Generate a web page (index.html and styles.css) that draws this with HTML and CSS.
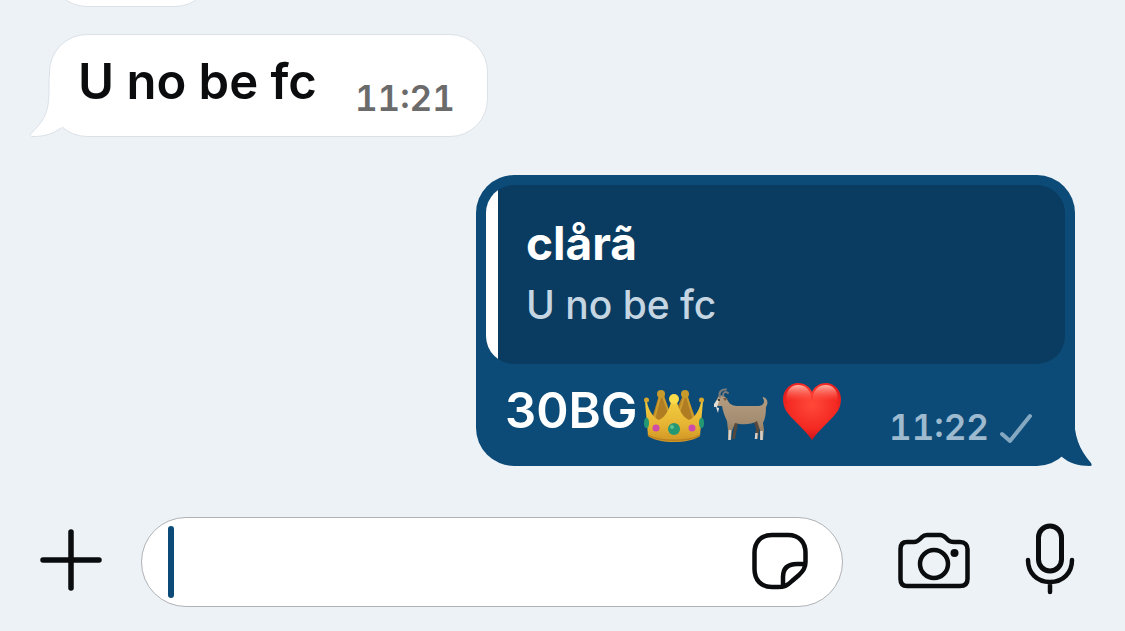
FILE: index.html
```html
<!DOCTYPE html>
<html lang="en">
<head>
<meta charset="utf-8">
<meta name="viewport" content="width=device-width, initial-scale=1">
<title>Chat</title>
<link rel="stylesheet" href="styles.css">
</head>
<body>
<main class="chat">
  <div class="bubble received earlier"></div>
  <article class="bubble received">
    <p class="message">U no be fc</p>
    <time class="time">11:21</time>
    <svg class="tail tail-left" viewBox="0 0 60 60" aria-hidden="true">
      <path d="M19 0V14C19 35 14 44 1.500 56C0 58 0 59.500 3 59.500C14 59.500 23 57 31 51L40 40V0Z" fill="#fff"/>
      <path d="M19 0V14C19 35 14 44 1.500 56C0 58 0 59.500 3 59.500C14 59.500 23 57 31 51" fill="none" stroke="#dbe1e7"/>
    </svg>
  </article>
  <article class="bubble sent">
    <blockquote class="quote">
      <cite class="author">clårã</cite>
      <p class="quoted">U no be fc</p>
    </blockquote>
    <div class="line">
      <p class="message">30BG</p>
      <svg class="emoji crown" viewBox="0 0 60 54" role="img" aria-label="Crown">
        <defs>
          <linearGradient id="gold" x1="0" y1="0" x2="0" y2="1"><stop offset="0" stop-color="#f5d13f"/><stop offset=".6" stop-color="#e6b434"/><stop offset="1" stop-color="#cf9524"/></linearGradient>
        </defs>
        <path d="M6 36L15 6H20L28 30L39 6H43L54 36Z" fill="#b07d22"/>
        <path d="M10 31L16 8M19 8L25 24M35 24L40 8M43 8L50 31" fill="none" stroke="#cb9c2e" stroke-width="2"/>
        <path d="M2 9C4 20 8 28 15 31C22 28 26 19 28 9H32C34 19 38 28 45 31C52 28 56 20 58 9L59 12L56 47C50 51 41 53 30 53C19 53 10 51 4 47L1 12Z" fill="url(#gold)"/>
        <path d="M4 46C14 53 46 53 56 46" fill="none" stroke="#b98020" stroke-width="1.500"/>
        <circle cx="17" cy="5" r="4" fill="#c79a2c"/><circle cx="41" cy="5" r="4" fill="#c79a2c"/>
        <circle cx="30" cy="10" r="5" fill="#fbdc4b"/><circle cx="2.500" cy="11" r="2.500" fill="#d9a62d"/><circle cx="57.500" cy="11" r="2.500" fill="#d9a62d"/>
        <circle cx="30" cy="40" r="6" fill="#239873"/><circle cx="28" cy="38" r="2" fill="#5fbf94"/>
        <circle cx="12" cy="39" r="3.500" fill="#cf4baa"/><circle cx="48" cy="39" r="3.500" fill="#cf4baa"/>
        <ellipse cx="2.500" cy="34" rx="2.500" ry="5" fill="#239873"/><ellipse cx="57.500" cy="34" rx="2.500" ry="5" fill="#239873"/>
      </svg>
      <svg class="emoji goat" viewBox="0 0 56 54" role="img" aria-label="Goat">
        <defs>
          <linearGradient id="coat" x1="0" y1="0" x2="0" y2="1"><stop offset="0" stop-color="#b49d80"/><stop offset=".6" stop-color="#a38c70"/><stop offset="1" stop-color="#8b765d"/></linearGradient>
        </defs>
        <path d="M19 33L21 40L19 51H22L25 35M40 33L43 40L42 51H45L48 32" fill="#55493d"/>
        <path d="M5 9C8 6 13 8 15 13C18 18 22 18 29 18H44C49 18 51 16 51 13C51 11 49 10 50 9C54 10 56 14 53 19C53 26 52 31 50 35L51 42L50 52H47L47 42L44 33C38 37 29 37 22 35L19 43L18 52H15L15 42L14 33C12 29 10 24 9 18L4 18C2 16 2 14 3 13Z" fill="url(#coat)"/>
        <path d="M7 9C5 4 9 1 13 1.500M10 8C10 4 12 3 15 5" fill="none" stroke="#7c7b79" stroke-width="2" stroke-linecap="round"/>
        <path d="M10 10L15 10L12 13Z" fill="#765d47"/>
        <path d="M4 12L6 13L4 19H1L1 16Z" fill="#e2ddd5"/>
        <circle cx="6" cy="12" r="1" fill="#222"/>
        <path d="M3 19L6 20L5 25Z" fill="#e7e2dc"/>
        <path d="M17 42L16.500 52M48.500 43L48.500 52M43.500 45L43 51" stroke="#d5d2ce" stroke-width="2.500"/>
      </svg>
      <svg class="emoji heart" viewBox="0 0 58 58" role="img" aria-label="Red heart">
        <defs>
          <radialGradient id="red" cx=".5" cy=".38" r=".65"><stop offset="0" stop-color="#ff4939"/><stop offset=".65" stop-color="#f42922"/><stop offset="1" stop-color="#c5101a"/></radialGradient>
          <linearGradient id="shine" x1="0" y1="0" x2="0" y2="1"><stop offset="0" stop-color="#ffb5a8"/><stop offset="1" stop-color="#ff5d4d" stop-opacity="0"/></linearGradient>
        </defs>
        <path d="M29 57C25 51 17 43 10 36C3 29 0 24 0 16C0 7 7 0 15 0C22 0 27 4 29 9C31 4 36 0 43 0C51 0 58 7 58 16C58 24 55 29 48 36C41 43 33 51 29 57Z" fill="url(#red)"/>
        <path d="M3 18C3 7 8 2 15 2C22 2 26 6 28 12V18ZM55 18C55 7 50 2 43 2C36 2 32 6 30 12V18Z" fill="url(#shine)"/>
      </svg>
      <time class="time">11:22</time>
      <svg class="check" viewBox="0 0 34 32" role="img" aria-label="Sent"><path d="M3 21L11 28L31 3" fill="none" stroke="currentColor" stroke-width="4" stroke-linecap="round" stroke-linejoin="round"/></svg>
    </div>
    <svg class="tail tail-right" viewBox="0 0 60 60" aria-hidden="true">
      <path d="M41 0V8C41 30 46 43 58 57C59 59 59 60 57 60C45 60 36 57 29 51L20 40V0Z" fill="#0c4b78"/>
    </svg>
  </article>
</main>
<form class="composer">
  <button class="icon add" type="button" aria-label="Add attachment">
    <svg viewBox="0 0 62 62"><path d="M31 3V59M3 31H59" stroke-width="5.500"/></svg>
  </button>
  <div class="field">
    <span class="caret"></span>
    <input class="input" type="text" aria-label="Message">
    <button class="icon sticker" type="button" aria-label="Stickers">
      <svg viewBox="0 0 56 58"><path d="M20 3H36C47 3 53.500 10 53.500 21V30C53.500 36 51 39 47 43L40 49C35 54 32 55 26 55H20C9 55 2.500 48 2.500 37V21C2.500 10 9 3 20 3ZM52 32H45C35 32 31 37 31 45V54" stroke-width="4.500"/></svg>
    </button>
  </div>
  <button class="icon camera" type="button" aria-label="Camera">
    <svg viewBox="0 0 72 58"><path d="M9 10H16C19 10 20 9 22 7L24 5C26 3 27 3 29 3H42C45 3 46 4 48 6L50 8C52 10 53 10 56 10H62C67 10 69.500 13 69.500 17V47C69.500 52 67 54 62 54H9C4 54 2.500 51 2.500 47V17C2.500 12 5 10 9 10Z" stroke-width="4.500"/><circle cx="36" cy="32" r="14" stroke-width="4.500"/><circle cx="56.500" cy="21" r="4" class="dot"/></svg>
  </button>
  <button class="icon mic" type="button" aria-label="Record voice message">
    <svg viewBox="0 0 50 72"><rect x="13.500" y="3" width="23" height="45" rx="11.500" stroke-width="5"/><path d="M3 37C3 50 12 59 25 59C38 59 47 50 47 37M25 59V69" stroke-width="4.500"/></svg>
  </button>
</form>
</body>
</html>
```
FILE: styles.css
```css
* { box-sizing: border-box; }

body {
  margin: 0;
  min-height: 100vh;
  display: flex;
  flex-direction: column;
  background: #edf2f7;
  font-family: Inter, "Liberation Sans", sans-serif;
}

p { margin: 0; }

.chat {
  flex: 1 1 0;
  min-height: 0;
  overflow: hidden;
  display: flex;
  flex-direction: column;
  justify-content: flex-end;
  padding: 0 50px 21px 49px;
}

.bubble {
  position: relative;
  flex: none;
  border-radius: 38px;
}

.received {
  align-self: flex-start;
  display: flex;
  align-items: flex-start;
  gap: 38px;
  margin-bottom: 38px;
  padding: 16px 32px 16px 28px;
  background: #fff;
  border: 1px solid #dbe1e7;
  color: #0b0c0d;
}

.earlier {
  width: 164px;
  height: 103px;
  margin-bottom: 27px;
}

.message {
  font-size: 49px;
  line-height: 62px;
  font-weight: 600;
}

.time {
  margin-top: 25px;
  font-size: 35px;
  line-height: 44px;
  font-weight: 600;
  font-variant-numeric: tabular-nums;
}

.received .time { color: #6b6b6b; }

.sent {
  align-self: flex-end;
  width: 599px;
  max-width: 100%;
  padding: 10px;
  background: #0c4b78;
  color: #fff;
}

.quote {
  margin: 0;
  padding: 30px 28px 35px 40px;
  border-radius: 28px;
  background: linear-gradient(#fff, #fff) 0 0 / 12px 100% no-repeat #093c60;
}

.author {
  display: block;
  font-size: 46px;
  line-height: 56px;
  font-style: normal;
  font-weight: 700;
}

.quoted {
  margin-top: 10px;
  font-size: 39px;
  line-height: 48px;
  font-weight: 500;
  color: #c5d5e1;
}

.line {
  display: flex;
  align-items: flex-start;
  padding: 16px 32px 7px 19px;
}

.line .message { font-weight: 600; }

.emoji { flex: none; }
.crown { width: 60px; height: 54px; margin-left: 6px; margin-top: 9px; }
.goat { width: 56px; height: 54px; margin-left: 9px; margin-top: 8px; }
.heart { width: 58px; height: 58px; margin-left: 14px; margin-top: 3px; }

.line .time {
  margin-left: auto;
  color: #9dbacf;
}

.check {
  flex: none;
  width: 34px;
  height: 32px;
  margin-left: 10px;
  margin-top: 33px;
  color: #85a8c1;
}

.tail {
  position: absolute;
  bottom: 0;
  width: 60px;
  height: 60px;
}

.tail-left { left: -20px; bottom: -1px; }
.tail-right { right: -18px; }

.composer {
  display: flex;
  align-items: center;
  padding: 30px 50px 24px 40px;
}

.icon {
  flex: none;
  display: block;
  padding: 0;
  border: 0;
  background: none;
  color: #0b0c0d;
}

.icon svg {
  display: block;
  width: 100%;
  fill: none;
  stroke: currentColor;
  stroke-linecap: round;
  stroke-linejoin: round;
}

.icon .dot { fill: currentColor; stroke: none; }

.add { width: 62px; margin-bottom: 4px; }

.field {
  flex: 1;
  min-width: 0;
  height: 90px;
  margin: 0 55px 0 39px;
  padding: 0 34px 0 26px;
  display: flex;
  align-items: center;
  background: #fff;
  border: 1px solid #b0b2b5;
  border-radius: 45px;
}

.caret {
  width: 6px;
  height: 72px;
  border-radius: 3px;
  background: #0c4b78;
}

.input {
  flex: 1;
  min-width: 0;
  height: 72px;
  padding: 0 12px;
  border: 0;
  outline: 0;
  background: transparent;
  font: 500 49px Inter, sans-serif;
  caret-color: #0c4b78;
}

.sticker { width: 56px; margin-bottom: 2px; }
.camera { width: 72px; margin-right: 55px; margin-bottom: 2px; }
.mic { width: 50px; margin-bottom: 6px; }
```
